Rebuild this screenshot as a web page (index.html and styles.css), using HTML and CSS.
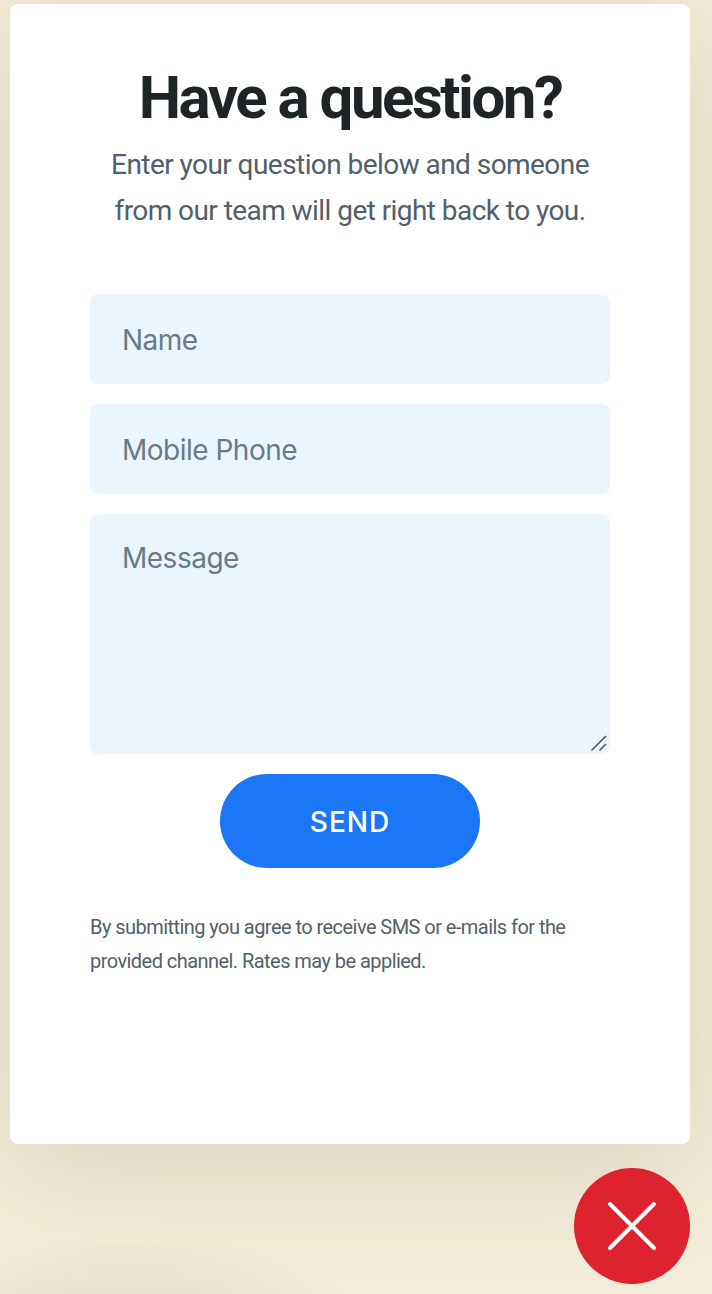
FILE: index.html
```html
<!DOCTYPE html>
<html lang="en"><head><meta charset="utf-8"><title>Have a question?</title><link rel="stylesheet" href="styles.css"></head>
<body>
<main class="card">
<h1 class="title">Have a question?</h1>
<p class="intro">Enter your question below and someone<br>from our team will get right back to you.</p>
<form class="form">
<div class="field"><span class="label">Name</span></div>
<div class="field"><span class="label">Mobile Phone</span></div>
<div class="field message"><span class="label">Message</span>
<svg class="grip" width="18" height="18" viewBox="0 0 18 18" fill="none" stroke-width="1.7"><path d="M3 17.500 16.500 4M11 17.500l5.500-5.500" stroke="#fff"/><path d="M1.500 16.500 16 2M9.500 16.500l6.500-6.500" stroke="#555b5f"/></svg></div>
<button class="send" type="button">SEND</button>
</form>
<p class="legal">By submitting you agree to receive SMS or e-mails for the<br>provided channel. Rates may be applied.</p>
</main>
<button class="close" type="button" aria-label="Close"><svg width="50" height="50" viewBox="0 0 50 50"><path d="M3 3 47 47M47 3 3 47" fill="none" stroke="#fff" stroke-width="4" stroke-linecap="round"/></svg></button>
</body></html>
```
FILE: styles.css
```css
* { box-sizing: border-box; }
body { margin: 0; height: 1294px; padding: 4px 22px 10px 10px; display: flex; flex-direction: column; overflow: hidden; background: radial-gradient(ellipse 240px 90px at 130px 1325px, rgba(80, 70, 50, .09), rgba(80, 70, 50, .055) 50%, transparent), #f3ecd8; font-family: Roboto, sans-serif; }
.card { height: 1140px; padding: 61px 80px 0; background: #fff; border-radius: 8px; box-shadow: 0 20px 120px rgba(80, 75, 50, .16); }
.title { margin: 0; font-size: 60px; line-height: 66px; letter-spacing: -2.5px; text-align: center; white-space: nowrap; color: #1f2527; }
.intro { margin: 11px -20px 0; font-size: 28px; line-height: 46px; letter-spacing: -.56px; text-align: center; white-space: nowrap; color: #51606a; }
.form { margin-top: 60px; display: flex; flex-direction: column; gap: 20px; }
.field { position: relative; height: 90px; padding: 29px 32px; background: #eaf5ff; border-radius: 8px; font: 28px/34px Inter, sans-serif; letter-spacing: -.5px; color: #697c83; }
.message { height: 240px; padding-top: 27px; }
.grip { position: absolute; right: 2px; bottom: 2px; }
.send { align-self: center; width: 260px; height: 94px; border: 0; border-radius: 47px; background: #1c77f7; color: #fff; font: 450 28px/34px Inter, sans-serif; padding: 2px 0 0; letter-spacing: 1px; }
.legal { margin: 42px 0 0; font-size: 20px; line-height: 34px; letter-spacing: -.55px; white-space: nowrap; color: #51606a; }
.close { align-self: flex-end; margin-top: 24px; width: 116px; height: 116px; padding: 0; border: 0; border-radius: 50%; background: #dd242e; display: flex; align-items: center; justify-content: center; }
```
